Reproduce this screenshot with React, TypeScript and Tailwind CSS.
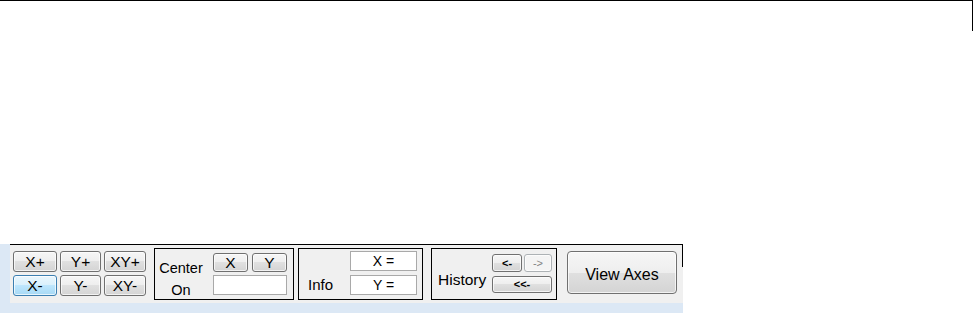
import React from "react";

type BtnProps = {
  children: React.ReactNode;
  className?: string;
  variant?: "normal" | "hot" | "disabled";
};

function Btn({ children, className = "", variant = "normal" }: BtnProps) {
  const v =
    variant === "hot"
      ? "border-[#3c7fb1] bg-[linear-gradient(to_bottom,#eaf6fd_0%,#d9f0fc_50%,#bee6fd_50%,#a7d9f5_100%)] text-black"
      : variant === "disabled"
      ? "border-[#adb2b5] bg-[#f4f4f4] text-[#838383]"
      : "border-[#707070] bg-[linear-gradient(to_bottom,#f6f6f6_0%,#eeeeee_50%,#e0e0e0_50%,#d4d4d4_100%)] text-black";
  return (
    <div
      className={`box-border flex items-center justify-center rounded-[3px] border shadow-[inset_0_0_0_1px_rgba(255,255,255,0.7)] ${v} ${className}`}
    >
      {children}
    </div>
  );
}

function Field({ children, className = "" }: { children?: React.ReactNode; className?: string }) {
  return (
    <div
      className={`box-border flex justify-center border border-[#a9a9a9] bg-white pt-px text-[14px] leading-[16px] text-black ${className}`}
    >
      {children}
    </div>
  );
}

export default function App() {
  return (
    <div className="flex h-[313px] w-[973px] flex-col bg-white font-['Liberation_Sans',Arial,sans-serif] text-black">
      <div className="box-border h-[31px] w-[973px] border-t border-r border-black" />
      <div className="mt-auto flex h-[69px] w-[973px] bg-white">
        <div className="flex h-[69px] w-[683px] bg-[#dce8f5] pl-[10px]">
          <div className="box-border flex h-[59px] w-[673px] items-start border-t border-black bg-[#f0f0f0]">
            {/* Pan buttons */}
            <div className="ml-[3px] mt-[6px] grid grid-cols-[44px_41px_42px] grid-rows-[21px_21px] gap-[3px] text-[15.5px] leading-none">
              <Btn>X+</Btn>
              <Btn>Y+</Btn>
              <Btn>XY+</Btn>
              <Btn variant="hot">X-</Btn>
              <Btn>Y-</Btn>
              <Btn>XY-</Btn>
            </div>

            {/* Center On */}
            <div className="ml-[8px] mt-[3px] box-border flex h-[52px] w-[140px] border border-black pl-[5px]">
              <div className="flex w-[42px] flex-col items-center gap-[6px] pt-[11px] text-[14.5px] leading-[16px]">
                <span>Center</span>
                <span>On</span>
              </div>
              <div className="ml-[11px] flex flex-col pt-[4px]">
                <div className="flex gap-[4px] text-[15.5px] leading-none">
                  <Btn className="h-[19px] w-[35px]">X</Btn>
                  <Btn className="h-[19px] w-[35px]">Y</Btn>
                </div>
                <Field className="mt-[3px] h-[20px] w-[74px]" />
              </div>
            </div>

            {/* Info */}
            <div className="ml-[4px] mt-[3px] box-border flex h-[52px] w-[125px] border border-black pl-[9px]">
              <div className="w-[42px] pt-[28px] text-[15px] leading-[16px]">Info</div>
              <div className="flex flex-col gap-[4px] pt-[2px]">
                <Field className="h-[20px] w-[67px]">X =</Field>
                <Field className="h-[20px] w-[67px]">Y =</Field>
              </div>
            </div>

            {/* History */}
            <div className="ml-[8px] mt-[3px] box-border flex h-[52px] w-[126px] border border-black pl-[6px]">
              <div className="w-[54px] pt-[23px] text-[15.5px] leading-[16px]">History</div>
              <div className="flex flex-col pt-[5px] text-[11px] font-bold leading-none">
                <div className="flex gap-[2px]">
                  <Btn className="h-[18px] w-[30px]">&lt;-</Btn>
                  <Btn variant="disabled" className="h-[18px] w-[28px] font-normal">-&gt;</Btn>
                </div>
                <Btn className="mt-[4px] h-[17px] w-[60px]">&lt;&lt;-</Btn>
              </div>
            </div>

            {/* View Axes */}
            <Btn className="ml-[10px] mt-[6px] h-[43px] w-[110px] !rounded-[4px] pt-[4px] text-[16px] leading-none">
              View Axes
            </Btn>

            <div className="ml-auto h-[22px] w-px bg-black" />
          </div>
        </div>
      </div>
    </div>
  );
}
